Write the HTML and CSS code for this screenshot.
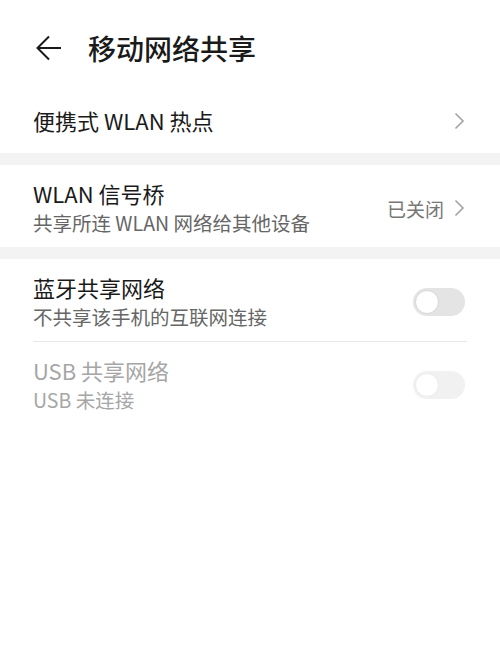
FILE: index.html
```html
<!DOCTYPE html>
<html lang="zh-CN">

<head>
    <meta charset="UTF-8">
    <meta name="viewport" content="width=device-width, initial-scale=1.0">
    <title>移动网络共享</title>
    <link rel="stylesheet" href="styles.css">
</head>

<body>
    <!-- Header -->
    <div class="header">
        <svg class="back" width="26" height="26" viewBox="0 0 26 26">
            <path d="M13 1.5 L1.5 13 L13 24.5 M1.5 13 H25" fill="none" stroke="#1a1a1a" stroke-width="2" />
        </svg>
        <div class="title">移动网络共享</div>
    </div>

    <!-- Hotspot -->
    <div class="row single">
        <div class="label">便携式 WLAN 热点</div>
        <svg class="chev" width="11" height="18" viewBox="0 0 11 18">
            <path d="M1.5 1.5 L9 9 L1.5 16.5" fill="none" stroke="#a3a3a3" stroke-width="1.6" />
        </svg>
    </div>

    <div class="band"></div>

    <!-- WLAN bridge -->
    <div class="row">
        <div class="texts">
            <div class="label">WLAN 信号桥</div>
            <div class="sub">共享所连 WLAN 网络给其他设备</div>
        </div>
        <div class="state">已关闭</div>
        <svg class="chev" width="11" height="18" viewBox="0 0 11 18">
            <path d="M1.5 1.5 L9 9 L1.5 16.5" fill="none" stroke="#a3a3a3" stroke-width="1.6" />
        </svg>
    </div>

    <div class="band"></div>

    <!-- Bluetooth / USB -->
    <div class="row">
        <div class="texts">
            <div class="label">蓝牙共享网络</div>
            <div class="sub">不共享该手机的互联网连接</div>
        </div>
        <div class="toggle"><span class="knob"></span></div>
    </div>
    <div class="divider"></div>
    <div class="row disabled">
        <div class="texts">
            <div class="label">USB 共享网络</div>
            <div class="sub">USB 未连接</div>
        </div>
        <div class="toggle"><span class="knob"></span></div>
    </div>
</body>

</html>
```

FILE: styles.css
```css
body {
    margin: 0;
    padding: 0;
    background-color: #ffffff;
    font-family: "Noto Sans CJK SC", "Noto Sans", sans-serif;
    color: #1a1a1a;
}

.header {
    height: 88px;
    display: flex;
    align-items: center;
    padding: 8px 0 0 36px;
    box-sizing: border-box;
}

.back {
    display: block;
}

.title {
    margin-left: 26px;
    font-size: 28px;
    line-height: 36px;
    font-weight: 500;
}

.row {
    display: flex;
    align-items: center;
    padding: 13px 35px 12px 33px;
    min-height: 82px;
    box-sizing: border-box;
}

.row.single {
    height: 65px;
    min-height: 0;
    padding-top: 0;
    padding-bottom: 2px;
}

.texts {
    flex: 1;
}

.label {
    flex: 1;
    font-size: 22px;
    line-height: 30px;
}

.sub {
    margin-top: 3px;
    font-size: 19.5px;
    line-height: 24px;
    color: #666666;
}

.state {
    font-size: 19px;
    color: #777777;
    margin-right: 10px;
    padding-top: 4px;
}

.chev {
    display: block;
    margin-top: 2px;
}

.band {
    height: 12px;
    background-color: #f3f3f3;
}

.divider {
    height: 1px;
    margin: 0 33px;
    background-color: #e8e8e8;
}

.toggle {
    width: 52px;
    height: 28px;
    border-radius: 14px;
    background-color: #e4e4e4;
    position: relative;
    margin-top: 2px;
}

.knob {
    position: absolute;
    left: 2px;
    top: 2px;
    width: 22px;
    height: 22px;
    border-radius: 50%;
    background-color: #ffffff;
    border: 1px solid #d6d6d6;
}

.disabled .label,
.disabled .sub {
    color: #a6a6a6;
}

.disabled .toggle {
    background-color: #f1f1f1;
}

.disabled .knob {
    border-color: #ebebeb;
}
```
